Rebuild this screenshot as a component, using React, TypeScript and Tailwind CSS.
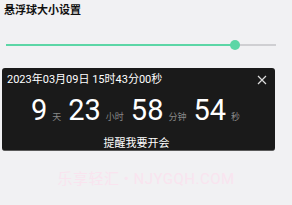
const font = { fontFamily: '"Roboto", "Noto Sans CJK SC", sans-serif' };

export default function App() {
  return (
    <div
      className="relative h-[205px] w-[292px] overflow-hidden bg-[#f1f1f3]"
      style={font}
    >
      <div className="px-[4px] pt-[4px] text-[11px] font-bold leading-[14px] text-[#111]">
        悬浮球大小设置
      </div>

      <div className="relative mx-[6px] mt-[22px] h-[10px] w-[270px]">
        <div className="absolute left-0 top-[4px] h-[2px] w-full bg-[#cfcfd2]" />
        <div className="absolute left-0 top-[4px] h-[2px] w-[229px] bg-[#5cd6a6]" />
        <div className="absolute left-[224px] top-0 h-[10px] w-[10px] rounded-full bg-[#5cd6a6]" />
      </div>

      <div className="mx-[2px] mt-[18px] h-[83px] w-[273px] overflow-hidden rounded-[3px] border-b border-[#5a5a5a] bg-[#1a1a1a] text-white">
        <div className="flex items-center justify-between pl-[5px] pr-[7px] pt-[5px]">
          <span className="text-[11px] leading-[14px]">2023年03月09日 15时43分00秒</span>
          <svg width="10" height="10" viewBox="0 0 10 10" className="mr-[1px]">
            <path d="M1 1L9 9M9 1L1 9" stroke="#ddd" strokeWidth="1.2" />
          </svg>
        </div>
        <div className="mt-[9px] flex items-baseline justify-center gap-[5px] pl-[2px] pr-[8px] leading-[28px]">
          <span className="text-[29px]">9</span>
          <span className="mr-[2px] text-[9px] text-[#888]">天</span>
          <span className="text-[29px]">23</span>
          <span className="mr-[2px] text-[9px] text-[#888]">小时</span>
          <span className="text-[29px]">58</span>
          <span className="mr-[2px] text-[9px] text-[#888]">分钟</span>
          <span className="text-[29px]">54</span>
          <span className="text-[9px] text-[#888]">秒</span>
        </div>
        <div className="mt-[6px] pr-[4px] text-center text-[11px] leading-[14px]">提醒我要开会</div>
      </div>

      <div className="pointer-events-none absolute left-0 top-[171px] w-full text-center text-[15px] leading-[16px] tracking-[0.5px] text-[#f9e4ef]">
        乐享轻汇 • NJYGQH.COM
      </div>
    </div>
  );
}
